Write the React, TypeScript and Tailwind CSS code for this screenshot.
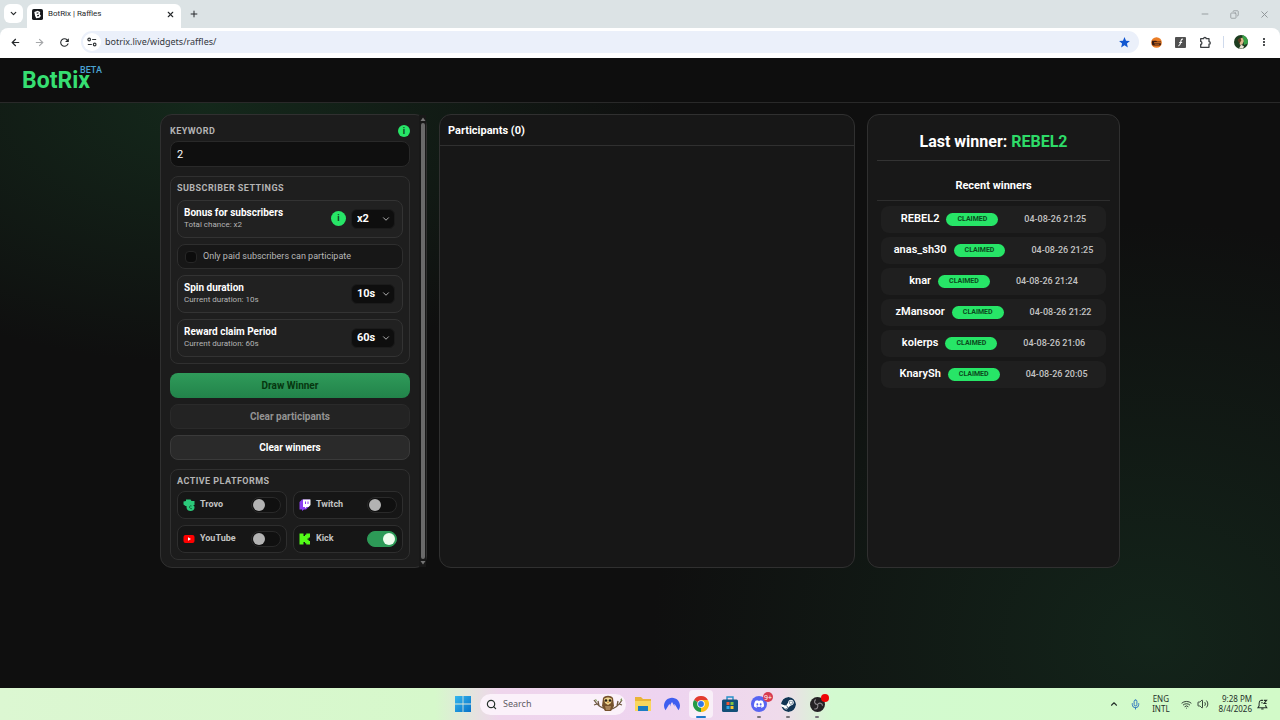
import { useState } from "react";
import type { ReactNode } from "react";
import {
  ArrowLeft,
  ArrowRight,
  ChevronDown,
  ChevronUp,
  Copy,
  Mic,
  Minus,
  Plus,
  Search,
  Volume2,
  Wifi,
  X,
} from "lucide-react";
import { MdMoreVert, MdRefresh, MdStar } from "react-icons/md";
import { SiDiscord, SiNordvpn, SiSteam } from "react-icons/si";

function BotRixFavicon() {
  return (
    <svg viewBox="0 0 12 12" className="size-[11px]" aria-hidden="true">
      <rect width="12" height="12" rx="2" fill="#17191d" />
      <path d="M2.5 3.2 6.2 1.8 9 3.2 8.4 5.6 9.8 7.4 8.2 9.6 4.6 10.2 3.4 7.6Z" fill="#fff" />
      <path d="M4.8 4.2 6.9 3.6 7 4.8 5.2 5.3ZM5.4 6.8 7.6 6.2 7.6 7.6 5.9 8.2Z" fill="#17191d" />
    </svg>
  );
}

function BrowserChrome() {
  return (
    <header className="bg-[#dce3e5] font-['Noto_Sans',sans-serif] text-[#26292c]">
      <div className="flex h-7 items-stretch pl-1">
        <button aria-label="Search tabs" className="mt-1 flex h-[19px] w-[19px] items-center justify-center rounded-md bg-white">
          <ChevronDown className="size-[9px]" strokeWidth={3.2} />
        </button>
        <div className="ml-1 mt-1 flex w-[154px] items-center rounded-t-md bg-white pb-1 pl-[5px] pr-1.5">
          <BotRixFavicon />
          <span className="ml-[5px] flex-1 font-[Roboto,sans-serif] text-[8px]">BotRix | Raffles</span>
          <button aria-label="Close tab">
            <X className="size-[9px]" strokeWidth={3} />
          </button>
        </div>
        <button aria-label="New tab" className="ml-2 flex items-center">
          <Plus className="size-[10px]" strokeWidth={2.4} />
        </button>
        <div className="ml-auto flex items-center gap-5 pr-2.5 text-[#8b9194]">
          <button aria-label="Minimize"><Minus className="size-[10px]" strokeWidth={2} /></button>
          <button aria-label="Restore"><Copy className="size-[9px] -scale-x-100" strokeWidth={2} /></button>
          <button aria-label="Close"><X className="size-[11px]" strokeWidth={2} /></button>
        </div>
      </div>
      <div className="flex h-[30px] items-center rounded-t-lg bg-white px-2.5 pb-0.5">
        <nav className="flex items-center gap-[13px]" aria-label="History">
          <button aria-label="Back"><ArrowLeft className="size-[11px]" strokeWidth={2.6} /></button>
          <button aria-label="Forward" className="text-[#a5a7a9]"><ArrowRight className="size-[11px]" strokeWidth={2.4} /></button>
          <button aria-label="Reload"><MdRefresh className="size-[13px]" /></button>
        </nav>
        <div className="ml-2.5 flex h-[22px] flex-1 items-center rounded-full bg-[#ebf0fa] pl-0.5 pr-2">
          <span className="flex size-[18px] items-center justify-center rounded-full bg-white">
            <svg viewBox="0 0 12 12" className="size-[10px]" fill="none" stroke="#35383b" strokeWidth="1.4" aria-hidden="true">
              <circle cx="2.6" cy="3" r="1.6" />
              <path d="M6.2 3H11M1 9h4.8" />
              <circle cx="9.2" cy="9" r="1.6" />
            </svg>
          </span>
          <input
            aria-label="Address"
            defaultValue="botrix.live/widgets/raffles/"
            className="ml-1 min-w-0 flex-1 bg-transparent text-[9px] text-[#33373c] outline-none"
          />
          <button aria-label="Bookmark" className="text-[#1257d0]"><MdStar className="size-[13px]" /></button>
        </div>
        <div className="ml-3 flex items-center gap-[13px]">
          <svg viewBox="0 0 12 12" className="size-[11px]" aria-hidden="true">
            <circle cx="6" cy="6" r="5.8" fill="#ea7c25" />
            <path d="M1 4h4.6l1 .8H11v1H3.4v1H11v1l-1 1.4H2L1 8Z" fill="#3b1b10" />
            <path d="M4 8h5" stroke="#ea7c25" strokeWidth=".7" />
          </svg>
          <svg viewBox="0 0 12 12" className="size-[11px]" aria-hidden="true">
            <rect width="12" height="12" rx="1" fill="#505050" />
            <path d="M8.6 2.4c-2-.4-2 1.8-2.4 3.4S5.6 9.9 3.6 9.5M4.6 6h3.2" fill="none" stroke="#fff" strokeWidth="1.2" />
          </svg>
          <button aria-label="Extensions">
            <svg viewBox="0 0 13 13" className="size-[13px]" fill="none" stroke="#3c3f42" strokeWidth="1.3" strokeLinejoin="round" aria-hidden="true">
              <path d="M1.7 2.7H4.6A1.3 1.3 0 0 1 7.2 2.7H10V5.6A1.3 1.3 0 0 1 10 8.2V11.3H1.7V8.5A1.6 1.6 0 0 0 1.7 5.4Z" />
            </svg>
          </button>
        </div>
        <div className="ml-[11px] flex items-center gap-2.5">
          <span className="h-3 w-px bg-[#cfdaec]" />
          <svg viewBox="0 0 14 14" className="size-[14px]" aria-hidden="true">
            <circle cx="7" cy="7" r="7" fill="#1d3d20" />
            <path d="M8 0a7 7 0 0 1 5.8 8.4L10 10 9 4Z" fill="#38a045" />
            <path d="M4.6 4.4 8.4 2.6 9.8 6 8.4 9.6 6 10Z" fill="#dfb78c" />
            <path d="M3.6 5 6.4 2.6 7.2 5.6 5.4 8.8Z" fill="#5b3a20" />
            <path d="M5 13.6 7 9.8l3 1.4-1 2.4Z" fill="#e9e4d6" />
          </svg>
          <button aria-label="Browser menu"><MdMoreVert className="size-3" /></button>
        </div>
      </div>
    </header>
  );
}

function InfoButton({ small = false }: { small?: boolean }) {
  return (
    <button
      aria-label="More information"
      className={`flex shrink-0 items-center justify-center rounded-full bg-[#27e567] font-bold leading-none text-[#0b3d1c] ${small ? "size-3 text-[9px]" : "size-[15px] text-[9px]"}`}
    >
      i
    </button>
  );
}

function SectionTitle({ children }: { children: ReactNode }) {
  return <h2 className="text-[9px] font-bold uppercase leading-3 tracking-wider text-[#b4b4b4]">{children}</h2>;
}

type SettingProps = {
  id: string;
  title: string;
  note: string;
  options: string[];
  info?: boolean;
};

function SettingRow({ id, title, note, options, info }: SettingProps) {
  return (
    <div className="flex h-[38px] items-center rounded-lg border border-[#333] bg-[#212121] pb-px pl-1.5 pr-[7px]">
      <div className="flex-1">
        <label htmlFor={id} className="block text-[10px] font-bold leading-[13px] text-white">{title}</label>
        <p className="text-[8px] leading-3 text-[#b5b5b5]">{note}</p>
      </div>
      {info && <InfoButton />}
      <div className="relative ml-[5px] flex items-center">
        <select
          id={id}
          className="h-5 w-11 appearance-none rounded-md border border-[#1b1b1b] bg-[#0e0e0e] pl-[5px] text-[11px] font-bold leading-none text-white"
        >
          {options.map((option) => (
            <option key={option}>{option}</option>
          ))}
        </select>
        <ChevronDown className="pointer-events-none absolute right-1 size-[10px] text-[#d0d0d0]" />
      </div>
    </div>
  );
}

function TrovoIcon() {
  return (
    <svg viewBox="0 0 24 24" className="size-3" aria-hidden="true">
      <path d="M6 1h9l2 3h6v8h-3c2 1 3 3 3 5 0 4-3 7-8 7s-8-3-8-8v-2H5l-4-3V5l5-1Z" fill="#2bc97a" />
      <path d="M18 19c-2 1-5 0-5-3 0-2 2-3 4-2" fill="none" stroke="#12653a" strokeWidth="2" />
    </svg>
  );
}

function TwitchIcon() {
  return (
    <svg viewBox="0 0 24 24" className="size-3" aria-hidden="true">
      <path d="M6 1 1 6v15h5v3l4-3h4l8-8V1Z" fill="#8b3ff0" />
      <path d="M8 1h15v11l-4 4h-4l-3 3v-3H8Z" fill="#fff" />
      <path d="M13 5v5M18 5v5" stroke="#8b3ff0" strokeWidth="2" />
    </svg>
  );
}

function YouTubeIcon() {
  return (
    <svg viewBox="0 0 24 24" className="size-3" aria-hidden="true">
      <rect x="1" y="4" width="22" height="16" rx="4" fill="#f00" />
      <path d="m10 8.5 6 3.5-6 3.5Z" fill="#fff" />
    </svg>
  );
}

function KickIcon() {
  return (
    <svg viewBox="0 0 24 24" className="size-3" aria-hidden="true">
      <path d="M1 1h8v5h3V3.5h2.5V1H22v8h-2.5v2H17v2.5h2.5V16H22v7h-7.5v-2.5H12V18H9v5H1Z" fill="#53fc18" />
    </svg>
  );
}

function PlatformToggle({ name, icon, initial }: { name: string; icon: ReactNode; initial: boolean }) {
  const [on, setOn] = useState(initial);
  return (
    <label className="flex h-7 items-center rounded-lg border border-[#2e2e2e] bg-[#161616] px-[5px]">
      {icon}
      <span className="ml-[5px] flex-1 text-[9px] font-bold text-[#c4c4c4]">{name}</span>
      <input type="checkbox" checked={on} onChange={() => setOn(!on)} className="peer sr-only" />
      <span className="flex h-4 w-[30px] items-center rounded-full border border-[#292929] bg-[#101010] px-px before:size-3 before:rounded-full before:bg-[#b3b3b3] peer-checked:justify-end peer-checked:border-[#2d9a57] peer-checked:bg-[#2d9a57] peer-checked:before:bg-[#eefced]" />
    </label>
  );
}

function SettingsPanel() {
  return (
    <section className="flex rounded-xl border border-[#303030] bg-[#1c1c1c] pl-[9px]">
      <div className="min-w-0 flex-1 pb-[7px] pt-2.5">
        <div className="flex h-3 items-center justify-between">
          <label htmlFor="keyword"><SectionTitle>Keyword</SectionTitle></label>
          <InfoButton small />
        </div>
        <input
          id="keyword"
          defaultValue="2"
          className="mt-1 h-[26px] w-full rounded-lg border border-[#292929] bg-[#0f0f0f] px-1.5 text-[11px] text-white outline-none"
        />

        <div className="mt-[9px] rounded-lg border border-[#303030] bg-[#1e1e1e] px-1.5 pb-1.5 pt-[5px]">
          <SectionTitle>Subscriber settings</SectionTitle>
          <div className="mt-1.5 flex flex-col gap-1.5">
            <SettingRow id="bonus" title="Bonus for subscribers" note="Total chance: x2" options={["x2", "x3", "x4"]} info />
            <label className="flex h-[25px] items-center rounded-lg border border-[#2e2e2e] bg-[#171717] px-[7px] text-[9px] text-[#b8b8b8]">
              <input type="checkbox" className="mr-1.5 size-3 appearance-none rounded-sm border border-[#262626] bg-[#0c0c0c] checked:bg-[#27e567]" />
              Only paid subscribers can participate
            </label>
            <SettingRow id="spin" title="Spin duration" note="Current duration: 10s" options={["10s", "15s", "20s"]} />
            <SettingRow id="claim" title="Reward claim Period" note="Current duration: 60s" options={["60s", "90s"]} />
          </div>
        </div>

        <div className="mt-[9px] flex flex-col gap-1.5 text-[10px] font-bold">
          <button className="h-[25px] rounded-lg bg-linear-to-b from-[#2f9b5a] to-[#22834a] text-[#06360f]">Draw Winner</button>
          <button className="h-[25px] rounded-lg border border-[#2a2a2a] bg-[#232323] text-[#939393]" disabled>Clear participants</button>
          <button className="h-[25px] rounded-lg border border-[#3a3a3a] bg-[#2a2a2a] text-white">Clear winners</button>
        </div>

        <div className="mt-[9px] rounded-lg border border-[#303030] bg-[#1c1c1c] px-1.5 pb-1.5 pt-[5px]">
          <SectionTitle>Active platforms</SectionTitle>
          <div className="mt-1 grid grid-cols-2 gap-1.5">
            <PlatformToggle name="Trovo" icon={<TrovoIcon />} initial={false} />
            <PlatformToggle name="Twitch" icon={<TwitchIcon />} initial={false} />
            <PlatformToggle name="YouTube" icon={<YouTubeIcon />} initial={false} />
            <PlatformToggle name="Kick" icon={<KickIcon />} initial={true} />
          </div>
        </div>
      </div>
      <div className="ml-[9px] flex w-[7px] flex-col items-center bg-[#181818] py-0.5" aria-hidden="true">
        <svg viewBox="0 0 6 4" className="h-1 w-1.5" fill="#757575"><path d="M3 .5 5.5 4h-5Z" /></svg>
        <div className="my-0.5 w-1 flex-1 rounded-full bg-[#6a6a6a]" />
        <svg viewBox="0 0 6 4" className="h-1 w-1.5" fill="#757575"><path d="M.5 0h5L3 3.5Z" /></svg>
      </div>
    </section>
  );
}

const winners = [
  { name: "REBEL2", time: "04-08-26 21:25" },
  { name: "anas_sh30", time: "04-08-26 21:25" },
  { name: "knar", time: "04-08-26 21:24" },
  { name: "zMansoor", time: "04-08-26 21:22" },
  { name: "kolerps", time: "04-08-26 21:06" },
  { name: "KnarySh", time: "04-08-26 20:05" },
];

function WinnersPanel() {
  return (
    <section className="rounded-xl border border-[#303030] bg-[#181818] px-[9px] pt-[15px]">
      <h2 className="border-b border-[#333] pb-[7px] text-center text-[16px] font-bold leading-[23px] text-white">
        Last winner: <span className="text-[#2edb68]">REBEL2</span>
      </h2>
      <h3 className="border-b border-[#2e2e2e] pb-[7px] pt-[17px] text-center text-[11px] font-bold leading-[15px] text-white">Recent winners</h3>
      <ul className="mx-1 mt-[5px] flex flex-col gap-1">
        {winners.map((winner) => (
          <li key={winner.name} className="flex h-[27px] items-center justify-center rounded-lg bg-[#1f1f1f]">
            <span className="text-[11px] font-semibold text-white">{winner.name}</span>
            <span className="ml-[7px] rounded-full bg-[#27e567] px-[11px] text-[7px] font-bold leading-[13px] text-[#0c4a20]">CLAIMED</span>
            <time className="ml-[26px] text-[9px] font-medium text-[#c4c4c4]">{winner.time}</time>
          </li>
        ))}
      </ul>
    </section>
  );
}

function Owl() {
  return (
    <svg viewBox="0 0 30 18" className="h-[18px] w-[30px]" aria-hidden="true">
      <path d="M1 5c3 5 7 8 13 9s11-2 15-9M4 9 1 10M6 11 5 6M24 11l1-5M26 9l3 1" fill="none" stroke="#6d5740" strokeWidth="1.3" />
      <path d="M2 4l2 1-1 2ZM27 5l2-2v3Z" fill="#7c9a55" />
      <path d="M10 3c2-3 8-3 10 0l1 8-3 5h-6l-3-5Z" fill="#75512d" />
      <path d="M11 4c2-2 6-2 8 0l-1 4-3 2-3-2Z" fill="#ecd58f" />
      <circle cx="13" cy="5.5" r="1.3" fill="#251b14" />
      <circle cx="17" cy="5.5" r="1.3" fill="#251b14" />
      <path d="m15 6 .8 2h-1.6Z" fill="#c76b22" />
      <path d="M12 11h6l-1 4h-4Z" fill="#a9835a" />
    </svg>
  );
}

function TaskButton({ label, running, active, children }: { label: string; running?: boolean; active?: boolean; children: ReactNode }) {
  return (
    <button aria-label={label} className={`relative flex h-7 w-6 items-center justify-center rounded ${active ? "bg-white/60" : ""}`}>
      {children}
      {active && <span className="absolute bottom-0 h-0.5 w-2.5 rounded-full bg-[#1c78c8]" />}
      {running && <span className="absolute bottom-0 h-0.5 w-1 rounded-full bg-[#77727a]" />}
    </button>
  );
}

function Taskbar() {
  return (
    <footer className="grid h-8 shrink-0 grid-cols-[1fr_auto_1fr] items-center bg-linear-[90deg,#dcf7d2_0%,#d6f8cb_34%,#efd5ec_39%,#eed4f0_52%,#efdbeb_61%,#d3fad0_65%,#d2fac8_100%] font-['Noto_Sans',sans-serif] text-[#25302a]">
      <span />
      <div className="flex items-center gap-[5px]">
        <TaskButton label="Start">
          <svg viewBox="0 0 16 16" className="size-4" aria-hidden="true">
            <defs>
              <linearGradient id="start-blue" x1="0" y1="0" x2="1" y2="1">
                <stop stopColor="#35b7ee" />
                <stop offset="1" stopColor="#0872c8" />
              </linearGradient>
            </defs>
            <path d="M0 0h7.6v7.6H0ZM8.4 0H16v7.6H8.4ZM0 8.4h7.6V16H0ZM8.4 8.4H16V16H8.4Z" fill="url(#start-blue)" />
          </svg>
        </TaskButton>
        <label className="flex h-[21px] w-[146px] items-center rounded-full bg-[#fbf1fa] pl-1.5 pr-[3px]">
          <Search className="size-[11px]" strokeWidth={2.6} />
          <input aria-label="Search" placeholder="Search" className="ml-1.5 w-0 flex-1 bg-transparent text-[9px] outline-none placeholder:text-[#605c65]" />
          <Owl />
        </label>
        <TaskButton label="File Explorer">
          <svg viewBox="0 0 18 16" className="h-4 w-[18px]" aria-hidden="true">
            <path d="M1 1h6l2 2h8v12H1Z" fill="#e9b437" />
            <path d="M1 5h16v10H1Z" fill="#f9d65e" />
            <path d="M4 10h10v5H4Z" fill="#1c7cc4" />
          </svg>
        </TaskButton>
        <TaskButton label="NordVPN"><SiNordvpn className="size-4 text-[#3f5ff0]" /></TaskButton>
        <TaskButton label="Chrome" active>
          <svg viewBox="0 0 24 24" className="size-4" aria-hidden="true">
            <path d="M12 12 1.6 6A12 12 0 0 1 22.4 6Z" fill="#e33b2e" />
            <path d="M12 12 22.4 6A12 12 0 0 1 12 24Z" fill="#fbc116" />
            <path d="M12 12v12A12 12 0 0 1 1.6 6Z" fill="#249a48" />
            <path d="M12 6h10.4l-5.2 9Z" fill="#fbc116" />
            <circle cx="12" cy="12" r="5.6" fill="#fff" />
            <circle cx="12" cy="12" r="4.4" fill="#3277e6" />
          </svg>
        </TaskButton>
        <TaskButton label="Microsoft Store">
          <svg viewBox="0 0 16 16" className="size-4" aria-hidden="true">
            <path d="M5 4V1h6v3" fill="none" stroke="#2690c8" strokeWidth="1.4" />
            <rect y="3.5" width="16" height="12.5" rx="1.5" fill="#124f78" />
            <path d="M4.5 6h3v3h-3Z" fill="#ef5735" />
            <path d="M8.5 6h3v3h-3Z" fill="#80c342" />
            <path d="M4.5 10h3v3h-3Z" fill="#2ca8e8" />
            <path d="M8.5 10h3v3h-3Z" fill="#f9c52c" />
          </svg>
        </TaskButton>
        <TaskButton label="Discord" running>
          <span className="flex size-4 items-center justify-center rounded-full bg-[#5865f2]"><SiDiscord className="size-2.5 text-white" /></span>
          <span className="absolute -right-0.5 top-0.5 flex size-[10px] items-center justify-center rounded-full bg-[#d83b50] text-[7px] leading-none text-white">9+</span>
        </TaskButton>
        <TaskButton label="Steam" running><SiSteam className="size-[15px] rounded-full bg-white text-[#123554]" /></TaskButton>
        <TaskButton label="OBS Studio" running>
          <svg viewBox="0 0 24 24" className="size-[15px]" aria-hidden="true">
            <circle cx="12" cy="12" r="12" fill="#242124" />
            <path d="M12 12C7 12 6 7 9 4M12 12c3-4 8-2 8 2M12 12c2 4-1 8-5 7" fill="none" stroke="#8f8a8f" strokeWidth="1.8" />
          </svg>
          <span className="absolute right-0 top-1 size-2 rounded-full bg-[#ef0505]" />
        </TaskButton>
      </div>
      <div className="flex items-center justify-end pr-3">
        <button aria-label="Hidden icons"><ChevronUp className="size-[10px]" strokeWidth={2.6} /></button>
        <Mic className="ml-[11px] size-[11px] text-[#246fbe]" />
        <span className="ml-[11px] text-center text-[8px] leading-[10px]">ENG<br />INTL</span>
        <Wifi className="ml-[11px] size-[11px]" />
        <Volume2 className="ml-[5px] size-3" strokeWidth={1.8} />
        <time className="ml-2.5 text-right text-[8px] leading-[10px]">9:28 PM<br />8/4/2026</time>
        <svg viewBox="0 0 12 12" className="ml-[5px] size-[11px]" fill="none" stroke="#25302a" strokeWidth="1.1" aria-hidden="true">
          <path d="M6.5 1.5H4.3Q2.3 2 2.3 4.5V7.5L1 9.5H10.7L9.5 7.7V6.5M4.6 10.8H7.2M7.5 1.5H10.5L7.5 5H10.5M4.6 4.2H6.2" />
        </svg>
      </div>
    </footer>
  );
}

export default function App() {
  return (
    <div className="flex min-h-screen flex-col bg-[#0f0f0f] font-[Roboto,sans-serif]">
      <BrowserChrome />
      <div className="flex h-[45px] items-start border-b border-[#292929] bg-[#0e0e0e] pl-[22px] pt-[7px]">
        <a href="#home" className="flex items-start font-bold">
          <span className="text-[23px] leading-8 text-[#36df72]">BotRix</span>
          <span className="-ml-2.5 text-[9px] font-medium leading-[11px] text-[#4ba3d3]">BETA</span>
        </a>
      </div>
      <main className="flex-1 bg-[radial-gradient(ellipse_460px_260px_at_16%_0%,#14281b_0%,transparent_100%),radial-gradient(ellipse_500px_420px_at_90%_92%,#13241a_0%,transparent_100%)] px-6 pb-6 pt-[11px]">
        <div className="mx-auto grid max-w-[960px] grid-cols-[267fr_416fr_253fr] gap-3">
          <SettingsPanel />
          <section className="rounded-xl border border-[#303030] bg-[#171717]">
            <h2 className="border-b border-[#303030] px-2 pb-[7px] pt-[9px] text-[11px] font-bold leading-[14px] text-white">Participants (0)</h2>
          </section>
          <WinnersPanel />
        </div>
      </main>
      <Taskbar />
    </div>
  );
}
